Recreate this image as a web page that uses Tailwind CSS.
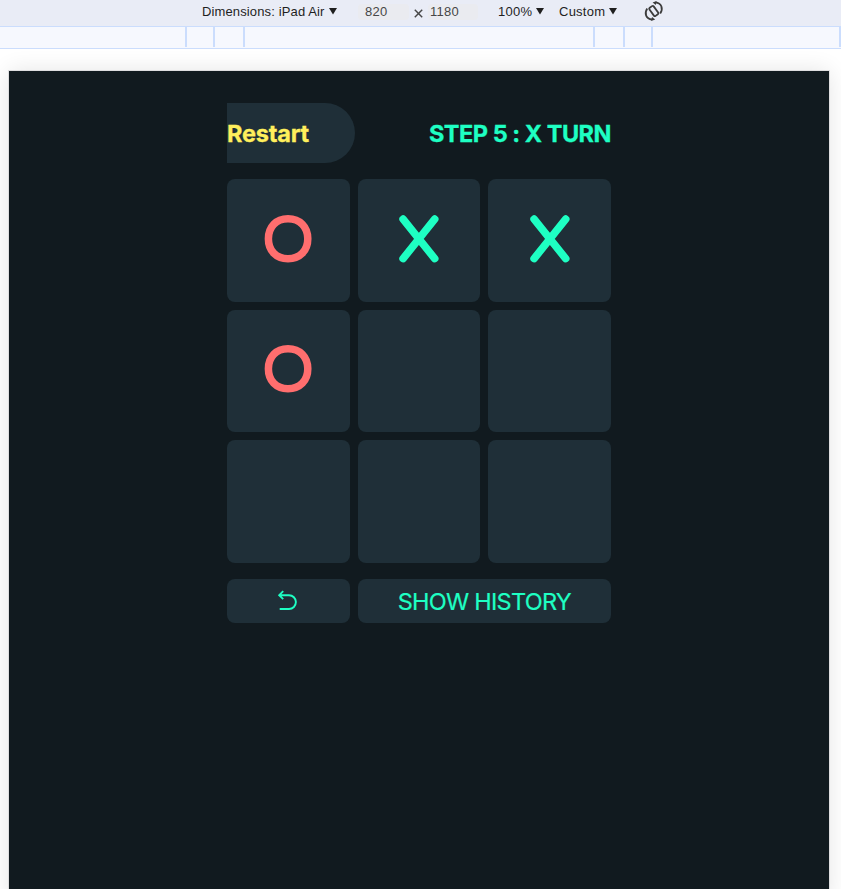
<!DOCTYPE html>
<html lang="en">
<head>
<meta charset="utf-8">
<title>Tic Tac Toe</title>
<script src="https://cdn.jsdelivr.net/npm/@tailwindcss/browser@4"></script>
</head>
<body class="h-[889px] w-[841px] overflow-hidden bg-white font-['Inter',sans-serif]">
<svg class="hidden">
  <symbol id="x" viewBox="0 0 48 48"><path d="M8.1 4.1 39.7 43.6M39.7 4.1 8.1 43.6" fill="none" stroke="#1effc3" stroke-width="7.6" stroke-linecap="round"/></symbol>
  <symbol id="o" viewBox="0 0 48 48"><path d="M24 3.8C36 3.8 43.8 12 43.8 23.8S36 43.8 24 43.8 4.4 35.6 4.4 23.8 12 3.8 24 3.8Z" fill="none" stroke="#ff6e6e" stroke-width="7.5"/></symbol>
</svg>
<header class="flex h-[27px] border-b border-[#cbddfd] bg-[#e9ecf6] pl-[202px] font-['Liberation_Sans',sans-serif] text-[13px] leading-6 whitespace-nowrap text-[#1f1f1f]">
  <div class="flex w-[156px]"><span class="w-[127px] tracking-[0.13px]">Dimensions: iPad Air</span><svg class="mt-2 h-[7px] w-2" viewBox="0 0 8 7"><path d="M0 0h8L4 6.5Z" fill="#1f1f1f"/></svg></div>
  <div class="mt-1 h-4 w-[51px] rounded-sm bg-[#eaebf0] pl-[7px] leading-4 tracking-[0.3px] text-[#474747]">820</div>
  <svg class="mt-[9px] ml-[5px] h-[9px] w-[9px]" viewBox="0 0 8 8"><path d="m.7.7 6.6 6.6m0-6.6L.7 7.3" stroke="#474747" stroke-width="1.3"/></svg>
  <div class="mt-1 h-4 w-[50px] rounded-sm bg-[#eaebf0] ml-[5px] pl-[2px] leading-4 tracking-[0.25px] text-[#474747]">1180</div>
  <div class="ml-[20px] flex w-[61px]"><span class="w-[38px] tracking-[0.3px]">100%</span><svg class="mt-2 h-[7px] w-2" viewBox="0 0 8 7"><path d="M0 0h8L4 6.5Z" fill="#1f1f1f"/></svg></div>
  <div class="flex w-[84px]"><span class="w-[50px] tracking-[0.25px]">Custom</span><svg class="mt-2 h-[7px] w-2" viewBox="0 0 8 7"><path d="M0 0h8L4 6.5Z" fill="#1f1f1f"/></svg></div>
  <svg class="mt-px h-5 w-[22px]" viewBox="0 0 22 20" fill="none" stroke="#3c3c3c" stroke-width="1.8"><rect x="8.2" y="5" width="5.2" height="10" rx="1.2" transform="rotate(-36 10.8 10)"/><path d="M12.5 1.3C18.5 2 20.5 7.5 17.2 12.5M9 18.5C3 17.8 1 12.5 4.2 7.4"/><path d="m13.6 0-4 1.4 3.2 2.6ZM8.2 19.9l4-1.4L9 15.9Z" fill="#3c3c3c" stroke="none"/></svg>
</header>
<div class="grid h-[22px] grid-cols-[187px_28px_30px_350px_30px_28px_188px] border-b border-[#cbddfd] bg-[#f6f8fe] pb-px">
  <i class="border-r-2 border-[#cbddfd]"></i><i class="border-r-2 border-[#cbddfd]"></i><i class="border-r-2 border-[#cbddfd]"></i><i class="border-r-2 border-[#cbddfd]"></i><i class="border-r-2 border-[#cbddfd]"></i><i class="border-r-2 border-[#cbddfd]"></i><i class="border-r-2 border-[#cbddfd]"></i>
</div>
<main class="mt-[22px] ml-[9px] h-[830px] w-[820px] bg-[#111a1f] pt-8 pl-[218px] shadow-[0_0_0_1px_#dededf,0_0_22px_#0000001c]">
  <div class="w-[384px]">
    <div class="flex h-[60px] items-center justify-between text-[23.5px] font-bold [font-optical-sizing:none] [-webkit-text-stroke:0.3px_currentColor]">
      <button class="h-[60px] w-32 rounded-r-full bg-[#1f2f38] pt-[2px] text-left tracking-[-0.2px] text-[#ffef5c]">Restart</button>
      <h1 class="pt-[2px] tracking-[-0.48px] whitespace-nowrap text-[#1effc3]">STEP 5 : X TURN</h1>
    </div>
    <div class="mt-4 grid h-[384px] grid-cols-3 grid-rows-3 gap-2">
      <div class="flex items-center justify-center rounded-lg bg-[#1f2f38]"><svg class="mb-[3px] h-12 w-12"><use href="#o"/></svg></div>
      <div class="flex items-center justify-center rounded-lg bg-[#1f2f38]"><svg class="mb-[3px] h-12 w-12"><use href="#x"/></svg></div>
      <div class="flex items-center justify-center rounded-lg bg-[#1f2f38]"><svg class="mb-[3px] h-12 w-12"><use href="#x"/></svg></div>
      <div class="flex items-center justify-center rounded-lg bg-[#1f2f38]"><svg class="mb-[4px] h-12 w-12"><use href="#o"/></svg></div>
      <div class="rounded-lg bg-[#1f2f38]"></div>
      <div class="rounded-lg bg-[#1f2f38]"></div>
      <div class="rounded-lg bg-[#1f2f38]"></div>
      <div class="rounded-lg bg-[#1f2f38]"></div>
      <div class="rounded-lg bg-[#1f2f38]"></div>
    </div>
    <div class="mt-4 grid h-11 grid-cols-3 gap-2 text-[23.5px] text-[#1effc3] [font-optical-sizing:none]">
      <button class="flex items-center justify-center rounded-lg bg-[#1f2f38]"><svg class="h-6 w-6" viewBox="0 0 24 24" fill="none" stroke="currentColor" stroke-width="1.9"><path d="M7.2 2.2 3.2 6.2 7.2 10.2M3.2 6.2h9.8a6.9 6.9 0 0 1 0 13.8H3.7"/></svg></button>
      <button class="col-span-2 rounded-lg bg-[#1f2f38] pt-[2px] tracking-[-0.73px] whitespace-nowrap [-webkit-text-stroke:0.2px_currentColor]">SHOW HISTORY</button>
    </div>
  </div>
</main>
</body>
</html>
